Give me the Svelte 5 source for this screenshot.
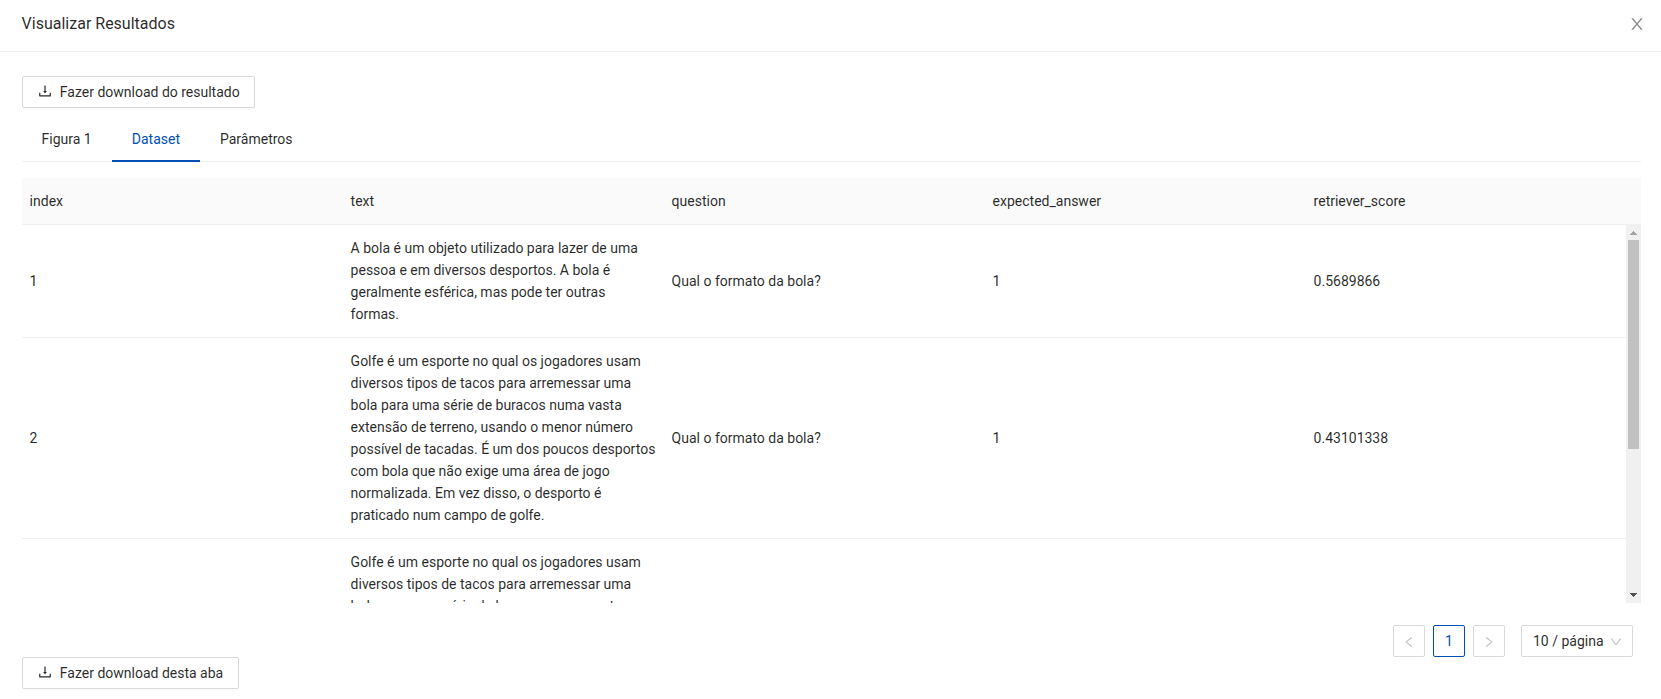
<script>
  const icons = {
    close: 'M563.8 512l262.5-312.9c4.4-5.2.7-13.1-6.1-13.1h-79.8c-4.7 0-9.2 2.1-12.3 5.7L511.6 449.8 295.1 191.7c-3-3.6-7.5-5.7-12.3-5.7H203c-6.8 0-10.5 7.9-6.1 13.1L459.4 512 196.9 824.9A7.95 7.95 0 00203 838h79.8c4.7 0 9.2-2.1 12.3-5.7l216.5-258.1 216.5 258.1c3 3.6 7.5 5.7 12.3 5.7h79.8c6.8 0 10.5-7.9 6.1-13.1L563.8 512z',
    download: 'M505.7 661a8 8 0 0012.6 0l112-141.7c4.1-5.2.4-12.9-6.3-12.9h-74.1V168c0-4.4-3.6-8-8-8h-60c-4.4 0-8 3.6-8 8v338.3H400c-6.7 0-10.4 7.7-6.3 12.9l112 141.8zM878 626h-60c-4.4 0-8 3.6-8 8v154H214V634c0-4.4-3.6-8-8-8h-60c-4.4 0-8 3.6-8 8v198c0 17.7 14.3 32 32 32h684c17.7 0 32-14.3 32-32V634c0-4.4-3.6-8-8-8z',
    left: 'M724 218.3V141c0-6.7-7.7-10.4-12.9-6.3L260.3 486.8a31.86 31.86 0 000 50.3l450.8 352.1c5.3 4.1 12.9.4 12.9-6.3v-77.3c0-4.9-2.3-9.6-6.1-12.6l-360-281 360-281.1c3.8-3 6.1-7.7 6.1-12.6z',
    right: 'M765.7 486.8L314.9 134.7A7.97 7.97 0 00302 141v77.3c0 4.9 2.3 9.6 6.1 12.6l360 281.1-360 281.1c-3.9 3-6.1 7.7-6.1 12.6V883c0 6.7 7.7 10.4 12.9 6.3l450.8-352.1a31.96 31.96 0 000-50.4z',
    down: 'M884 256h-75c-5.1 0-9.9 2.5-12.9 6.6L512 654.2 227.9 262.6c-3-4.1-7.8-6.6-12.9-6.6h-75c-6.5 0-10.3 7.4-6.5 12.7l352.6 486.1c12.8 17.6 39 17.6 51.7 0l352.6-486.1c3.9-5.3.1-12.7-6.4-12.7z'
  };
  const tabs = ['Figura 1', 'Dataset', 'Parâmetros'];
  const columns = ['index', 'text', 'question', 'expected_answer', 'retriever_score'];
  const golfe = 'Golfe é um esporte no qual os jogadores usam diversos tipos de tacos para arremessar uma bola para uma série de buracos numa vasta extensão de terreno, usando o menor número possível de tacadas. É um dos poucos desportos com bola que não exige uma área de jogo normalizada. Em vez disso, o desporto é praticado num campo de golfe.';
  const rows = [
    ['1', 'A bola é um objeto utilizado para lazer de uma pessoa e em diversos desportos. A bola é geralmente esférica, mas pode ter outras formas.', 'Qual o formato da bola?', '1', '0.5689866'],
    ['2', golfe, 'Qual o formato da bola?', '1', '0.43101338'],
    ['', golfe, '', '', '']
  ];
  let active = $state('Dataset');
</script>

{#snippet icon(name)}
  <svg class="icon {name}" viewBox="0 0 1024 1024" aria-hidden="true"><path d={icons[name]} /></svg>
{/snippet}

<div class="modal">
  <header>
    <h1>Visualizar Resultados</h1>
    <button class="dismiss" aria-label="Fechar">{@render icon('close')}</button>
  </header>
  <main>
    <button class="btn">{@render icon('download')}<span>Fazer download do resultado</span></button>
    <nav>
      {#each tabs as tab}
        <button class="tab" class:active={tab === active} onclick={() => (active = tab)}>{tab}</button>
      {/each}
    </nav>
    <section class="table">
      <div class="thead">
        {#each columns as column}<div class="cell">{column}</div>{/each}
      </div>
      <div class="body">
        <div class="rows">
          {#each rows as row}
            <div class="row">
              {#each row as value}<div class="cell">{value}</div>{/each}
            </div>
          {/each}
        </div>
        <div class="scrollbar">
          <svg viewBox="0 0 15 15"><path d="M7 6h1v1h1v1h1v1h1v1H4V9h1V8h1V7h1z" fill="#a3a3a3" /></svg>
          <div class="thumb"></div>
          <svg class="end" viewBox="0 0 15 15"><path d="M4 5h7v1h-1v1H9v1H8v1H7V8H6V7H5V6H4z" fill="#505050" /></svg>
        </div>
      </div>
    </section>
    <div class="pagination">
      <button class="page off" aria-label="Anterior">{@render icon('left')}</button>
      <button class="page current">1</button>
      <button class="page off" aria-label="Próxima">{@render icon('right')}</button>
      <button class="size"><span>10 / página</span>{@render icon('down')}</button>
    </div>
    <button class="btn">{@render icon('download')}<span>Fazer download desta aba</span></button>
  </main>
</div>

<style>
  :global(body) { background: #fff; overflow: hidden; }
  .modal {
    box-sizing: border-box;
    height: 699px;
    overflow: hidden;
    font: 14px/22px Roboto, sans-serif;
    color: rgba(0, 0, 0, 0.85);
  }
  button {
    box-sizing: border-box;
    margin: 0;
    padding: 0;
    border: 0;
    background: #fff;
    font: inherit;
    color: inherit;
    cursor: pointer;
  }
  .icon { display: block; fill: currentColor; flex: none; }
  header {
    box-sizing: border-box;
    height: 52px;
    padding: 0 15px 4px 21.6px;
    display: flex;
    align-items: center;
    justify-content: space-between;
    border-bottom: 1px solid #f0f0f0;
  }
  h1 { margin: 0; font-size: 16px; line-height: 22px; font-weight: 400; }
  .dismiss { color: rgba(0, 0, 0, 0.45); }
  .close { width: 18px; height: 18px; }
  main {
    padding: 24px 20px 0 21.6px;
    display: flex;
    flex-direction: column;
    align-items: flex-start;
  }
  .btn {
    height: 32px;
    padding: 0 14.5px 0 14.4px;
    display: flex;
    align-items: center;
    gap: 6.8px;
    border: 1px solid #d9d9d9;
    border-radius: 2px;
    box-shadow: 0 2px 0 rgba(0, 0, 0, 0.016);
  }
  .download { width: 16px; height: 16px; margin-bottom: 2px; }
  nav {
    align-self: stretch;
    box-sizing: border-box;
    height: 54px;
    margin-bottom: 16px;
    padding-top: 8px;
    display: flex;
    box-shadow: inset 0 -1px #f0f0f0;
  }
  .tab { padding: 0 20px; background: none; }
  .tab.active { color: #0050b3; box-shadow: inset 0 -2px #0050b3; }
  .table { align-self: stretch; }
  .thead, .row {
    display: grid;
    grid-template-columns: repeat(5, 321px);
    align-items: center;
    border-bottom: 1px solid #f0f0f0;
  }
  .thead { background: #fafafa; padding-right: 15px; }
  .cell { padding: 12px 8px; overflow-wrap: break-word; }
  .body { height: 378px; display: flex; overflow: hidden; }
  .rows { flex: 1; min-width: 0; overflow: hidden; }
  .scrollbar {
    width: 15px;
    flex: none;
    display: flex;
    flex-direction: column;
    background: #f0f0f0;
  }
  .scrollbar svg { width: 15px; height: 15px; display: block; }
  .thumb { height: 209px; margin: 0 2px; background: #c1c1c1; }
  .end { margin-top: auto; }
  .pagination {
    align-self: flex-end;
    margin: 22px 8px 0 0;
    display: flex;
    gap: 8px;
  }
  .page {
    width: 32px;
    height: 32px;
    display: flex;
    align-items: center;
    justify-content: center;
    border: 1px solid #d9d9d9;
    border-radius: 2px;
  }
  .current { border-color: #0050b3; color: #0050b3; }
  .off { color: rgba(0, 0, 0, 0.25); }
  .left, .right { width: 14px; height: 14px; margin-top: 2px; }
  .size {
    width: 112px;
    height: 32px;
    margin-left: 8px;
    padding: 0 9px 0 11px;
    display: flex;
    align-items: center;
    justify-content: space-between;
    border: 1px solid #d9d9d9;
    border-radius: 2px;
  }
  .down { width: 14px; height: 14px; margin-top: 2px; color: rgba(0, 0, 0, 0.25); }
</style>
